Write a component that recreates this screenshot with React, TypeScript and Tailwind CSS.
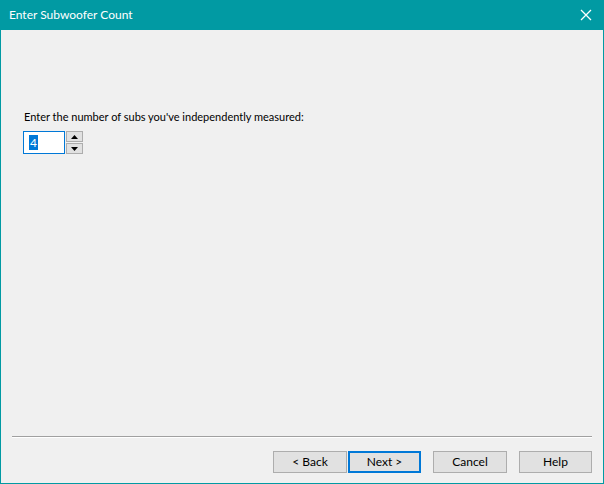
import React from "react";

export default function App() {
  const font = { fontFamily: 'Lato, "Noto Sans", sans-serif' };
  return (
    <div className="w-[604px] h-[484px] bg-[#019aa3] flex flex-col text-[12px] text-black" style={font}>
      <div className="h-[30px] flex items-center justify-between pl-[9px] pr-[11px] text-white">
        <span className="text-[12px] leading-none">Enter Subwoofer Count</span>
        <svg width="12" height="12" viewBox="0 0 12 12" className="mr-[1px]">
          <path d="M1 1 L11 11 M11 1 L1 11" stroke="white" strokeWidth="1.3" />
        </svg>
      </div>
      <div className="flex-1 mx-[1px] mb-[1px] bg-[#f0f0f0] flex flex-col">
        <div className="pt-[79px] pl-[22px]">
          <div className="leading-[16px] pl-[1px] text-[11px]">Enter the number of subs you've independently measured:</div>
          <div className="mt-[6px] flex items-start">
            <div className="w-[42px] h-[23px] border border-[#0078d7] bg-white flex items-center pl-[5px]">
              <span className="bg-[#0078d7] text-white leading-[15px] px-[1px]">4</span>
            </div>
            <div className="flex flex-col ml-[1px] gap-[1px]">
              <div className="w-[17px] h-[11px] bg-[#e1e1e1] border border-[#adadad] flex items-center justify-center">
                <svg width="7" height="4" viewBox="0 0 7 4"><path d="M3.5 0 L7 4 L0 4 Z" fill="black" /></svg>
              </div>
              <div className="w-[17px] h-[11px] bg-[#e1e1e1] border border-[#adadad] flex items-center justify-center">
                <svg width="7" height="4" viewBox="0 0 7 4"><path d="M0 0 L7 0 L3.5 4 Z" fill="black" /></svg>
              </div>
            </div>
          </div>
        </div>
        <div className="flex-1" />
        <div className="mx-[11px] h-[2px] border-t border-[#a0a0a0] border-b border-b-white" />
        <div className="flex justify-end pr-[11px] pt-[13px] pb-[10px]">
          <button className="w-[74px] h-[22px] bg-[#e1e1e1] border border-[#adadad] text-[12px]">&lt; Back</button>
          <button className="ml-[1px] w-[73px] h-[22px] bg-[#e1e1e1] border-2 border-[#0078d7] text-[12px]">Next &gt;</button>
          <button className="ml-[12px] w-[74px] h-[22px] bg-[#e1e1e1] border border-[#adadad] text-[12px]">Cancel</button>
          <button className="ml-[12px] w-[73px] h-[22px] bg-[#e1e1e1] border border-[#adadad] text-[12px]">Help</button>
        </div>
      </div>
    </div>
  );
}
